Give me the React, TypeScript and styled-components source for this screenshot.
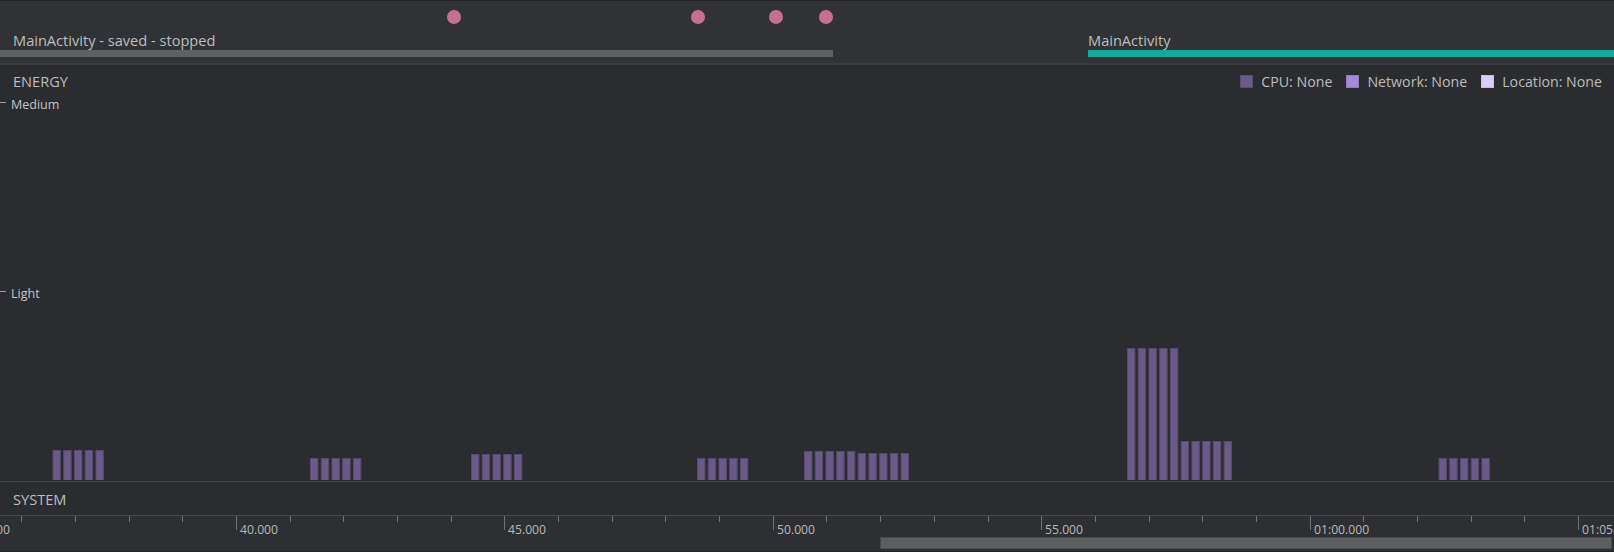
import React from 'react';
import styled, { createGlobalStyle } from 'styled-components';

const GlobalStyle = createGlobalStyle`
  html, body {
    margin: 0;
    padding: 0;
    background: #2b2c2f;
  }
  body {
    font-family: "Open Sans", "Noto Sans", "Liberation Sans", sans-serif;
  }
`;

// timeline scale: 5 seconds between major ticks
const PX_PER_SEC = 53.68;
const ORIGIN_X = 236; // x of 40.000
const timeToX = (sec: number) => ORIGIN_X + (sec - 40) * PX_PER_SEC;
const SAMPLE_PX = PX_PER_SEC / 5;

const CHART_HEIGHT = 383;

interface BarGroup {
  x: number;
  heights: number[];
}

const energyGroups: BarGroup[] = [
  { x: 52.5, heights: [30, 30, 30, 30, 30] },
  { x: 310, heights: [22, 22, 22, 22, 22] },
  { x: 471, heights: [26, 26, 26, 26, 26] },
  { x: 697, heights: [22, 22, 22, 22, 22] },
  { x: 804, heights: [29, 29, 29, 29, 29, 27, 27, 27, 27, 27] },
  { x: 1127, heights: [132, 132, 132, 132, 132, 39, 39, 39, 39, 39] },
  { x: 1438.5, heights: [22, 22, 22, 22, 22] },
];

const eventDots = [454, 698, 776, 826];

const activities = [
  { label: 'MainActivity - saved - stopped', start: 0, end: 833, labelX: 13, color: '#5f6062' },
  { label: 'MainActivity', start: 1088, end: 1614, labelX: 1088, color: '#16a999' },
];

const legend = [
  { label: 'CPU: None', color: '#6a5a87', border: '#5a4c74' },
  { label: 'Network: None', color: '#a48ad6', border: '#9279c4' },
  { label: 'Location: None', color: '#dccdf8', border: '#cbbbe8' },
];

const levels = [
  { label: 'Medium', y: 0 },
  { label: 'Light', y: 189 },
];

const tickSeconds = Array.from({ length: 31 }, (_, i) => 35 + i);

const formatTime = (sec: number) => {
  if (sec < 60) return `${sec}.000`;
  const m = Math.floor(sec / 60);
  const s = sec % 60;
  return `0${m}:${s.toString().padStart(2, '0')}.000`;
};

const App: React.FC = () => {
  return (
    <>
      <GlobalStyle />
      <Profiler>
        <ActivityTrack>
          {eventDots.map((x) => (
            <EventDot key={x} style={{ left: x - 7 }} />
          ))}
          {activities.map((a) => (
            <React.Fragment key={a.label}>
              <ActivityLabel style={{ left: a.labelX }}>{a.label}</ActivityLabel>
              <ActivityBar color={a.color} style={{ left: a.start, width: a.end - a.start }} />
            </React.Fragment>
          ))}
        </ActivityTrack>
        <Divider />
        <EnergySection>
          <SectionHeader>
            <SectionTitle>ENERGY</SectionTitle>
            <Legend>
              {legend.map((l) => (
                <LegendItem key={l.label}>
                  <Swatch color={l.color} border={l.border} />
                  {l.label}
                </LegendItem>
              ))}
            </Legend>
          </SectionHeader>
          <ChartArea>
            {levels.map((lv) => (
              <LevelMark key={lv.label} style={{ top: lv.y }}>
                <LevelTick />
                {lv.label}
              </LevelMark>
            ))}
            <svg width="1614" height={CHART_HEIGHT} style={{ display: 'block' }}>
              {energyGroups.map((g) =>
                g.heights.map((h, i) => (
                  <rect
                    key={`${g.x}-${i}`}
                    x={g.x + i * SAMPLE_PX + 0.5}
                    y={CHART_HEIGHT - h + 0.5}
                    width={7.4}
                    height={h}
                    fill="#6a5a87"
                    stroke="#574970"
                    strokeWidth={1}
                  />
                ))
              )}
            </svg>
          </ChartArea>
        </EnergySection>
        <SystemRow>
          <SectionTitle>SYSTEM</SectionTitle>
        </SystemRow>
        <Axis>
          <TickArea>
            <svg width="1614" height="21" style={{ display: 'block' }}>
              {tickSeconds.map((s) => {
                const x = Math.round(timeToX(s)) + 0.5;
                const major = s % 5 === 0;
                return (
                  <line key={s} x1={x} x2={x} y1={0} y2={major ? 14 : 6} stroke="#707174" strokeWidth={1} />
                );
              })}
            </svg>
            {tickSeconds
              .filter((s) => s % 5 === 0)
              .map((s) => (
                <TickLabel key={s} style={{ left: Math.round(timeToX(s)) + 4 }}>
                  {formatTime(s)}
                </TickLabel>
              ))}
          </TickArea>
          <ScrollTrack>
            <ScrollThumb style={{ left: 880, width: 732 }} />
          </ScrollTrack>
        </Axis>
      </Profiler>
    </>
  );
};

const Profiler = styled.div`
  width: 1614px;
  height: 552px;
  display: flex;
  flex-direction: column;
  background: #2b2c2f;
  border-top: 1px solid #242527;
  border-bottom: 1px solid #222325;
  box-sizing: border-box;
  overflow: hidden;
  color: #bbbbbb;
`;

const ActivityTrack = styled.div`
  position: relative;
  height: 62px;
  flex-shrink: 0;
  background: #313235;
`;

const EventDot = styled.div`
  position: absolute;
  top: 9px;
  width: 14px;
  height: 14px;
  border-radius: 50%;
  background: #c47093;
`;

const ActivityLabel = styled.div`
  position: absolute;
  top: 30px;
  font-size: 14.6px;
  line-height: 18px;
  color: #bdbdbd;
  white-space: nowrap;
`;

const ActivityBar = styled.div<{ color: string }>`
  position: absolute;
  top: 49px;
  height: 7px;
  background: ${({ color }) => color};
`;

const Divider = styled.div`
  height: 2px;
  flex-shrink: 0;
  background: #3b3c3f;
`;

const EnergySection = styled.div`
  display: flex;
  flex-direction: column;
  height: 416px;
  flex-shrink: 0;
  border-bottom: 1px solid #45464a;
`;

const SectionHeader = styled.div`
  height: 32px;
  display: flex;
  align-items: center;
  justify-content: space-between;
  padding: 0 12px 0 13px;
`;

const SectionTitle = styled.div`
  font-size: 14.6px;
  color: #bdbdbd;
`;

const Legend = styled.div`
  display: flex;
  align-items: center;
  gap: 14px;
`;

const LegendItem = styled.div`
  display: flex;
  align-items: center;
  gap: 8px;
  font-size: 14.2px;
  color: #bdbdbd;
`;

const Swatch = styled.span<{ color: string; border: string }>`
  width: 11px;
  height: 11px;
  background: ${({ color }) => color};
  border: 1px solid ${({ border }) => border};
`;

const ChartArea = styled.div`
  position: relative;
  flex: 1;
  overflow: hidden;
`;

const LevelMark = styled.div`
  position: absolute;
  left: 0;
  display: flex;
  align-items: center;
  gap: 5px;
  font-size: 12.5px;
  line-height: 15px;
  color: #c4c4c4;
`;

const LevelTick = styled.span`
  width: 6px;
  height: 1px;
  margin-top: -4px;
  background: #9a9a9a;
`;

const SystemRow = styled.div`
  height: 33px;
  flex-shrink: 0;
  display: flex;
  align-items: center;
  padding-left: 13px;
  border-bottom: 1px solid #45464a;
`;

const Axis = styled.div`
  height: 35px;
  flex-shrink: 0;
  display: flex;
  flex-direction: column;
  background: #2e2f32;
`;

const TickArea = styled.div`
  position: relative;
  height: 21px;
`;

const TickLabel = styled.span`
  position: absolute;
  top: 6px;
  font-size: 12.2px;
  line-height: 15px;
  color: #b9b9b9;
  white-space: nowrap;
`;

const ScrollTrack = styled.div`
  position: relative;
  height: 12px;
`;

const ScrollThumb = styled.div`
  position: absolute;
  top: 0;
  height: 12px;
  box-sizing: border-box;
  background: #5d5e60;
  border: 1px solid #48494b;
`;

export default App;
